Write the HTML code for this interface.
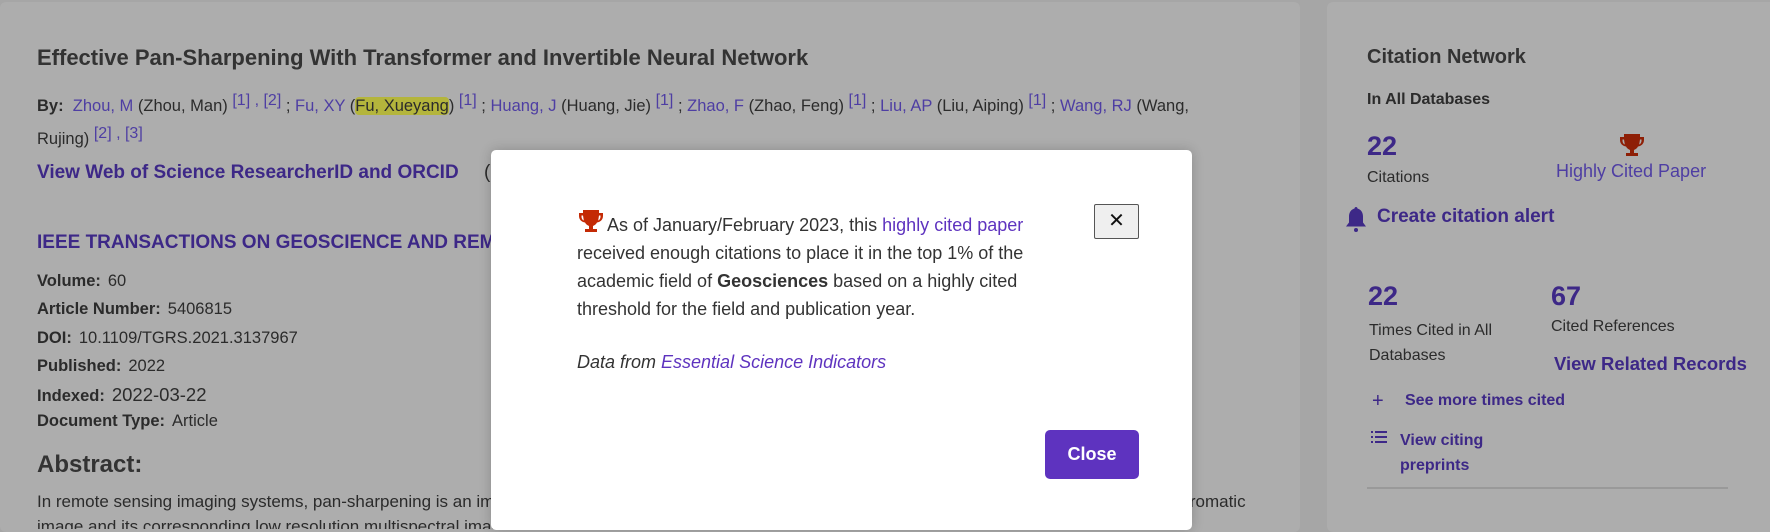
<!DOCTYPE html>
<html><head><meta charset="utf-8"><style>
*{margin:0;padding:0;box-sizing:border-box}
body{width:1770px;height:518px;overflow:hidden;background:#a6a6a6;font-family:"Liberation Sans",sans-serif;color:#2b2b2b;position:relative}
.card{position:absolute;background:#adadad;border-radius:6px;overflow:hidden}
.a{position:absolute;white-space:nowrap}
.lk{color:#4e3ea3}
.pl{color:#3d2887;font-weight:bold}
.b{font-weight:bold}
sup{font-size:16px;vertical-align:6px}
.row{position:absolute;left:37px;font-size:16.5px;white-space:nowrap}
.row b{margin-right:7px}
.modal{position:absolute;left:491px;top:150px;width:701px;height:380px;background:#fff;border-radius:5px;box-shadow:0 0 12px rgba(0,0,0,.2)}
.mt{position:absolute;left:86px;top:59px;width:490px;font-size:18px;line-height:28px;color:#333}
</style></head><body>
<div class="card" style="left:0;top:2px;width:1300px;height:530px">
<div class="a" style="left:37px;top:487px;font-size:17px;line-height:25px;white-space:normal;width:1240px;height:40px;overflow:hidden">In remote sensing imaging systems, pan-sharpening is an important technique to obtain high resolution multispectral images from a high resolution panchromatic image and its corresponding low resolution multispectral image and the convolution spatial operator.</div>
</div>
<div class="card" style="left:1327px;top:2px;width:460px;height:530px"></div>

<div class="a b" style="left:37px;top:45px;font-size:22px;color:#333">Effective Pan-Sharpening With Transformer and Invertible Neural Network</div>
<div class="a" style="left:37px;top:87px;font-size:16.5px;line-height:28px;white-space:normal;width:1200px"><b>By:</b>&nbsp;&nbsp;<span class="lk">Zhou, M</span> (Zhou, Man) <sup class="lk">[1] , [2]</sup> ; <span class="lk">Fu, XY</span> (<span style="background:#b4b53c;border-radius:4px">Fu, Xueyang</span>) <sup class="lk">[1]</sup> ; <span class="lk">Huang, J</span> (Huang, Jie) <sup class="lk">[1]</sup> ; <span class="lk">Zhao, F</span> (Zhao, Feng) <sup class="lk">[1]</sup> ; <span class="lk">Liu, AP</span> (Liu, Aiping) <sup class="lk">[1]</sup> ; <span class="lk">Wang, RJ</span> (Wang, Rujing) <sup class="lk">[2] , [3]</sup></div>
<div class="a pl" style="left:37px;top:162px;font-size:19px">View Web of Science ResearcherID and ORCID <span style="font-weight:normal;color:#2b2b2b;margin-left:20px">(p</span></div>
<div class="a pl" style="left:37px;top:232px;font-size:19px">IEEE TRANSACTIONS ON GEOSCIENCE AND REMOTE</div>
<div class="row" style="top:272px"><b>Volume:</b>60</div>
<div class="row" style="top:300px"><b>Article Number:</b>5406815</div>
<div class="row" style="top:329px"><b>DOI:</b>10.1109/TGRS.2021.3137967</div>
<div class="row" style="top:357px"><b>Published:</b>2022</div>
<div class="row" style="top:384px"><b>Indexed:</b><span style="font-size:18.5px">2022-03-22</span></div>
<div class="row" style="top:412px"><b>Document Type:</b>Article</div>
<div class="a b" style="left:37px;top:451px;font-size:24px;color:#333">Abstract:</div>

<div class="a b" style="left:1367px;top:46px;font-size:20px;color:#333">Citation Network</div>
<div class="a b" style="left:1367px;top:91px;font-size:16px">In All Databases</div>
<div class="a pl" style="left:1367px;top:131px;font-size:27px">22</div>
<div class="a" style="left:1367px;top:169px;font-size:16px">Citations</div>
<svg class="a" style="left:1618px;top:133px" width="28" height="25" viewBox="0 0 28 25"><path d="M6 1h16v3h4v3c0 4-3 6-6 6.5-1 2-3 3-4 3.5v3h4v3H8v-3h4v-3c-1-.5-3-1.5-4-3.5C5 13 2 11 2 7V4h4z M4.5 6.5v1c0 2 1 3.5 2.3 4L6 6.5z M23.5 6.5v1c0 2-1 3.5-2.3 4L22 6.5z" fill="#8e1f06" fill-rule="evenodd"/></svg>
<div class="a" style="left:1556px;top:161px;font-size:18px;color:#4e3ea3">Highly Cited Paper</div>
<svg class="a" style="left:1345px;top:206px" width="22" height="27" viewBox="0 0 22 27"><path d="M11 1c1 0 1.5.8 1.5 1.5 3.5 1 5.5 4 5.5 8v6l3 4H1l3-4v-6c0-4 2-7 5.5-8C9.5 1.8 10 1 11 1z" fill="#3d2887"/><circle cx="11" cy="24" r="2" fill="#3d2887"/></svg>
<div class="a pl" style="left:1377px;top:206px;font-size:19px">Create citation alert</div>
<div class="a pl" style="left:1368px;top:281px;font-size:27px">22</div>
<div class="a pl" style="left:1551px;top:281px;font-size:27px">67</div>
<div class="a" style="left:1369px;top:318px;font-size:16px;line-height:25px">Times Cited in All<br>Databases</div>
<div class="a" style="left:1551px;top:318px;font-size:16px">Cited References</div>
<div class="a pl" style="left:1554px;top:353px;font-size:18.5px">View Related Records</div>
<div class="a" style="left:1372px;top:390px;font-size:20px;color:#3d2887">+</div>
<div class="a pl" style="left:1405px;top:392px;font-size:16px">See more times cited</div>
<svg class="a" style="left:1371px;top:431px" width="16" height="12" viewBox="0 0 16 12"><g fill="#3d2887"><rect x="0" y="0" width="2" height="2"/><rect x="4" y="0" width="12" height="2"/><rect x="0" y="5" width="2" height="2"/><rect x="4" y="5" width="12" height="2"/><rect x="0" y="10" width="2" height="2"/><rect x="4" y="10" width="12" height="2"/></g></svg>
<div class="a pl" style="left:1400px;top:428px;font-size:16px;line-height:25px">View citing<br>preprints</div>
<div class="a" style="left:1367px;top:487px;width:361px;height:2px;background:#999"></div>

<div class="modal">
<div class="mt"><svg style="vertical-align:-3px;margin-right:2px" width="28" height="25" viewBox="0 0 28 25"><path d="M6 1h16v3h4v3c0 4-3 6-6 6.5-1 2-3 3-4 3.5v3h4v3H8v-3h4v-3c-1-.5-3-1.5-4-3.5C5 13 2 11 2 7V4h4z M4.5 6.5v1c0 2 1 3.5 2.3 4L6 6.5z M23.5 6.5v1c0 2-1 3.5-2.3 4L22 6.5z" fill="#c42a05" fill-rule="evenodd"/></svg>As of January/February 2023, this <span style="color:#5e33bf">highly cited paper</span> received enough citations to place it in the top 1% of the academic field of <b>Geosciences</b> based on a highly cited threshold for the field and publication year.</div>
<div class="a" style="left:86px;top:202px;font-size:18px;font-style:italic;color:#333">Data from <span style="color:#5e33bf">Essential Science Indicators</span></div>
<div class="a" style="left:603px;top:54px;width:45px;height:35px;background:#efefef;border:1px solid #555;border-radius:2px;font-size:20px;text-align:center;line-height:33px;color:#111">✕</div>
<div class="a" style="left:554px;top:280px;width:94px;height:49px;background:#5e33bf;border-radius:5px;color:#fff;font-weight:bold;font-size:18px;text-align:center;line-height:49px">Close</div>
</div>
</body></html>
